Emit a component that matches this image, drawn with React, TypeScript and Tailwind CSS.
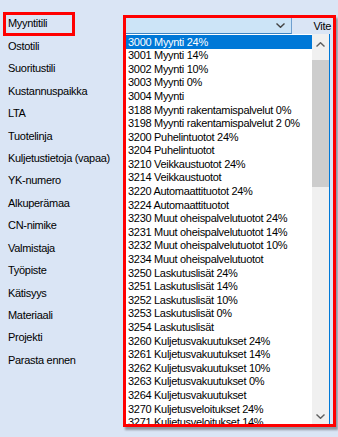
const labels = [
  "Ostotili",
  "Suoritustili",
  "Kustannuspaikka",
  "LTA",
  "Tuotelinja",
  "Kuljetustietoja (vapaa)",
  "YK-numero",
  "Alkuperämaa",
  "CN-nimike",
  "Valmistaja",
  "Työpiste",
  "Kätisyys",
  "Materiaali",
  "Projekti",
  "Parasta ennen",
];

const accounts = [
  "3000 Myynti 24%",
  "3001 Myynti 14%",
  "3002 Myynti 10%",
  "3003 Myynti 0%",
  "3004 Myynti",
  "3188 Myynti rakentamispalvelut 0%",
  "3198 Myynti rakentamispalvelut 2 0%",
  "3200 Puhelintuotot 24%",
  "3204 Puhelintuotot",
  "3210 Veikkaustuotot 24%",
  "3214 Veikkaustuotot",
  "3220 Automaattituotot 24%",
  "3224 Automaattituotot",
  "3230 Muut oheispalvelutuotot 24%",
  "3231 Muut oheispalvelutuotot 14%",
  "3232 Muut oheispalvelutuotot 10%",
  "3234 Muut oheispalvelutuotot",
  "3250 Laskutuslisät 24%",
  "3251 Laskutuslisät 14%",
  "3252 Laskutuslisät 10%",
  "3253 Laskutuslisät 0%",
  "3254 Laskutuslisät",
  "3260 Kuljetusvakuutukset 24%",
  "3261 Kuljetusvakuutukset 14%",
  "3262 Kuljetusvakuutukset 10%",
  "3263 Kuljetusvakuutukset 0%",
  "3264 Kuljetusvakuutukset",
  "3270 Kuljetusveloitukset 24%",
  "3271 Kuljetusveloitukset 14%",
];

function Chevron({ up = false, className = "" }: { up?: boolean; className?: string }) {
  return (
    <svg viewBox="0 0 9 5" className={className} fill="none">
      <path
        d={up ? "M0.5 4.5 4.5 0.7 8.5 4.5" : "M0.5 0.5 4.5 4.3 8.5 0.5"}
        stroke="currentColor"
        strokeWidth="1.4"
      />
    </svg>
  );
}

export default function App() {
  return (
    <div
      className="flex h-[437px] w-[338px] overflow-hidden bg-[#dae5f5] text-[11px] tracking-[-0.3px] text-black"
      style={{ fontFamily: '"Liberation Sans", Arial, sans-serif' }}
    >
      {/* labels */}
      <div className="flex w-[123px] shrink-0 flex-col px-[8px] pt-[12.5px]">
        <div className="-ml-[5px] -my-[0.8px] flex h-[24px] w-[72px] items-center border-[3px] border-[#ff0000] pl-[2px]">
          Myyntitili
        </div>
        {labels.map((l) => (
          <div key={l} className="flex h-[22.43px] items-center whitespace-nowrap">
            {l}
          </div>
        ))}
      </div>

      {/* account picker */}
      <div className="pt-[15px]">
        <div className="flex h-[412px] w-[213px] flex-col border-[3px] border-[#ff0000] shadow-[2px_3px_2px_rgba(0,0,0,0.35)]">
          <div className="flex h-[16px] shrink-0">
            <div className="flex w-[166px] items-center justify-end border-b border-r border-b-[#3c84c4] border-r-[#6f9fcf] bg-[#cce4f7] pr-[6px]">
              <Chevron className="h-[5px] w-[9px] text-[#444]" />
            </div>
            <div className="flex flex-1 items-center justify-end pr-[2px]">Vite</div>
          </div>

          <div className="flex flex-1 overflow-hidden">
            <div className="flex w-[204px] overflow-hidden border-r border-[#0078d7] bg-white">
              <div className="flex-1 overflow-hidden pt-px">
                {accounts.map((a, i) => (
                  <div
                    key={a}
                    className={
                      "flex h-[13.6px] items-center whitespace-nowrap pl-[2px] " +
                      (i === 0 ? "bg-[#0078d7] text-white" : "")
                    }
                  >
                    {a}
                  </div>
                ))}
              </div>
              <div className="flex w-[17px] shrink-0 flex-col bg-[#f0f0f0]">
                <div className="flex h-[26px] items-center justify-center pb-[6px]">
                  <Chevron up className="h-[5px] w-[9px] text-[#606060]" />
                </div>
                <div className="h-[127px] bg-[#cdcdcd]" />
                <div className="flex-1" />
                <div className="flex h-[17px] items-center justify-center pt-[2px]">
                  <Chevron className="h-[5px] w-[9px] text-[#606060]" />
                </div>
              </div>
            </div>
          </div>
        </div>
      </div>
    </div>
  );
}
